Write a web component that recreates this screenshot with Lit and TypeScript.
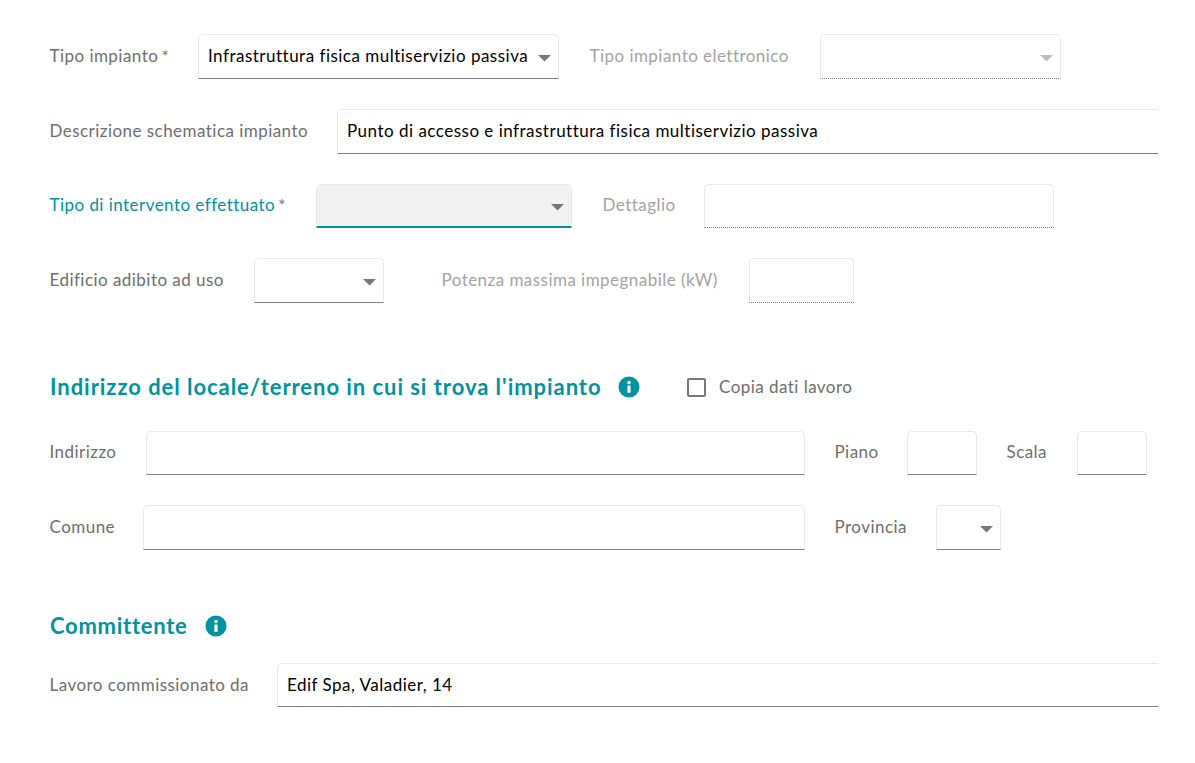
import { LitElement, html, css, svg } from "lit";
import { customElement } from "lit/decorators.js";

const info = html`<svg class="info" viewBox="0 0 22 22" width="22" height="22"><circle cx="11" cy="11" r="10.5" fill="#00929f"/><rect x="9.4" y="9.4" width="3.2" height="7.4" rx=".5" fill="#fff"/><circle cx="11" cy="6.6" r="1.8" fill="#fff"/></svg>`;
const caret = svg`<path d="M0 0h13l-6.5 6.5z"/>`;

@customElement("app-root")
export class AppRoot extends LitElement {
  static styles = css`
    :host { display: block; width: 1195px; height: 763px; background: #fff; overflow: hidden; box-sizing: border-box; padding: 34px 37px 0 50px; font-family: "Lato", "Open Sans", sans-serif; font-size: 17px; letter-spacing: .49px; color: #6e6e6e; }
    .row { display: grid; align-items: center; height: 45px; margin-bottom: 30px; }
    .r1 { grid-template-columns: 148px 361px 31px 230px 241px; }
    .r2 { grid-template-columns: 287px 821px; }
    .r3 { grid-template-columns: 266px 256px 31px 101px 350px; height: 44px; }
    .r4 { grid-template-columns: 204px 130px 58px 307px 105px; }
    .r5 { grid-template-columns: 96px 659px 30px 72px 70px 30px 70px 70px; height: 44px; }
    .r6 { grid-template-columns: 93px 662px 30px 101px 65px; }
    .r7 { grid-template-columns: 227px 881px; height: 44px; }
    .label { white-space: nowrap; letter-spacing: .46px; position: relative; top: -1px; left: -.5px; }
    .r3 .label, .r5 .label, .r1 .label.req { top: -2px; }
    .label.off { color: #a3a3a3; }
    .label.on { color: #00929f; }
    .star { font-size: 18px; margin-left: 3px; color: #777; position: relative; top: 1px; }
    .field { box-sizing: border-box; height: 100%; border: 1px solid #e8e8e8; border-bottom: 1px solid #808080; border-radius: 5px 5px 0 0; padding: 0 9px; display: flex; align-items: center; justify-content: space-between; color: #000; white-space: nowrap; overflow: hidden; background: #fff; }
    .field span { position: relative; top: -1px; }
    .field.open-right { border-right: none; border-radius: 5px 0 0 0; }
    .field.off { border-bottom: 1px dotted #777; }
    .field.active { background: #f2f2f2; border-bottom: 2px solid #00929f; }
    .caret { width: 13px; height: 7px; fill: #777; flex: none; margin-left: auto; margin-right: -2px; position: relative; top: 2px; }
    .off .caret { fill: #bdbdbd; }
    .head { display: flex; align-items: center; height: 30px; margin: 69px 0 29px; }
    .head h2 { margin: 0 0 2px 0; font-size: 22px; letter-spacing: .95px; font-weight: 700; color: #00929f; white-space: nowrap; }
    .info { flex: none; margin-left: 17px; }
    .sec2 { margin-top: 61px; margin-bottom: 22px; }
    .sec2 h2 { letter-spacing: .72px; }
    .sec2 .info { margin-left: 18px; }
    .check { display: flex; align-items: center; margin-left: 47px; }
    .box { box-sizing: border-box; width: 19px; height: 19px; border: 2px solid #777; border-radius: 2px; margin-right: 13px; }
  `;

  private sel(cls = "", text = "") {
    return html`<div class="field ${cls}"><span>${text}</span><svg class="caret" viewBox="0 0 13 7">${caret}</svg></div>`;
  }
  private inp(cls = "", text = "") {
    return html`<div class="field ${cls}"><span>${text}</span></div>`;
  }

  render() {
    return html`
      <div class="row r1">
        <div class="label req">Tipo impianto<span class="star">*</span></div>
        ${this.sel("", "Infrastruttura fisica multiservizio passiva")}
        <div></div>
        <div class="label off">Tipo impianto elettronico</div>
        ${this.sel("off")}
      </div>
      <div class="row r2">
        <div class="label">Descrizione schematica impianto</div>
        ${this.inp("open-right", "Punto di accesso e infrastruttura fisica multiservizio passiva")}
      </div>
      <div class="row r3">
        <div class="label on">Tipo di intervento effettuato<span class="star">*</span></div>
        ${this.sel("active")}
        <div></div>
        <div class="label off">Dettaglio</div>
        ${this.inp("off")}
      </div>
      <div class="row r4">
        <div class="label">Edificio adibito ad uso</div>
        ${this.sel()}
        <div></div>
        <div class="label off">Potenza massima impegnabile (kW)</div>
        ${this.inp("off")}
      </div>
      <div class="head sec1">
        <h2>Indirizzo del locale/terreno in cui si trova l'impianto</h2>
        ${info}
        <div class="check"><div class="box"></div><div class="label">Copia dati lavoro</div></div>
      </div>
      <div class="row r5">
        <div class="label">Indirizzo</div>
        ${this.inp()}
        <div></div>
        <div class="label">Piano</div>
        ${this.inp()}
        <div></div>
        <div class="label">Scala</div>
        ${this.inp()}
      </div>
      <div class="row r6">
        <div class="label">Comune</div>
        ${this.inp()}
        <div></div>
        <div class="label">Provincia</div>
        ${this.sel()}
      </div>
      <div class="head sec2">
        <h2>Committente</h2>
        ${info}
      </div>
      <div class="row r7">
        <div class="label">Lavoro commissionato da</div>
        ${this.inp("open-right", "Edif Spa, Valadier, 14")}
      </div>
    `;
  }
}
